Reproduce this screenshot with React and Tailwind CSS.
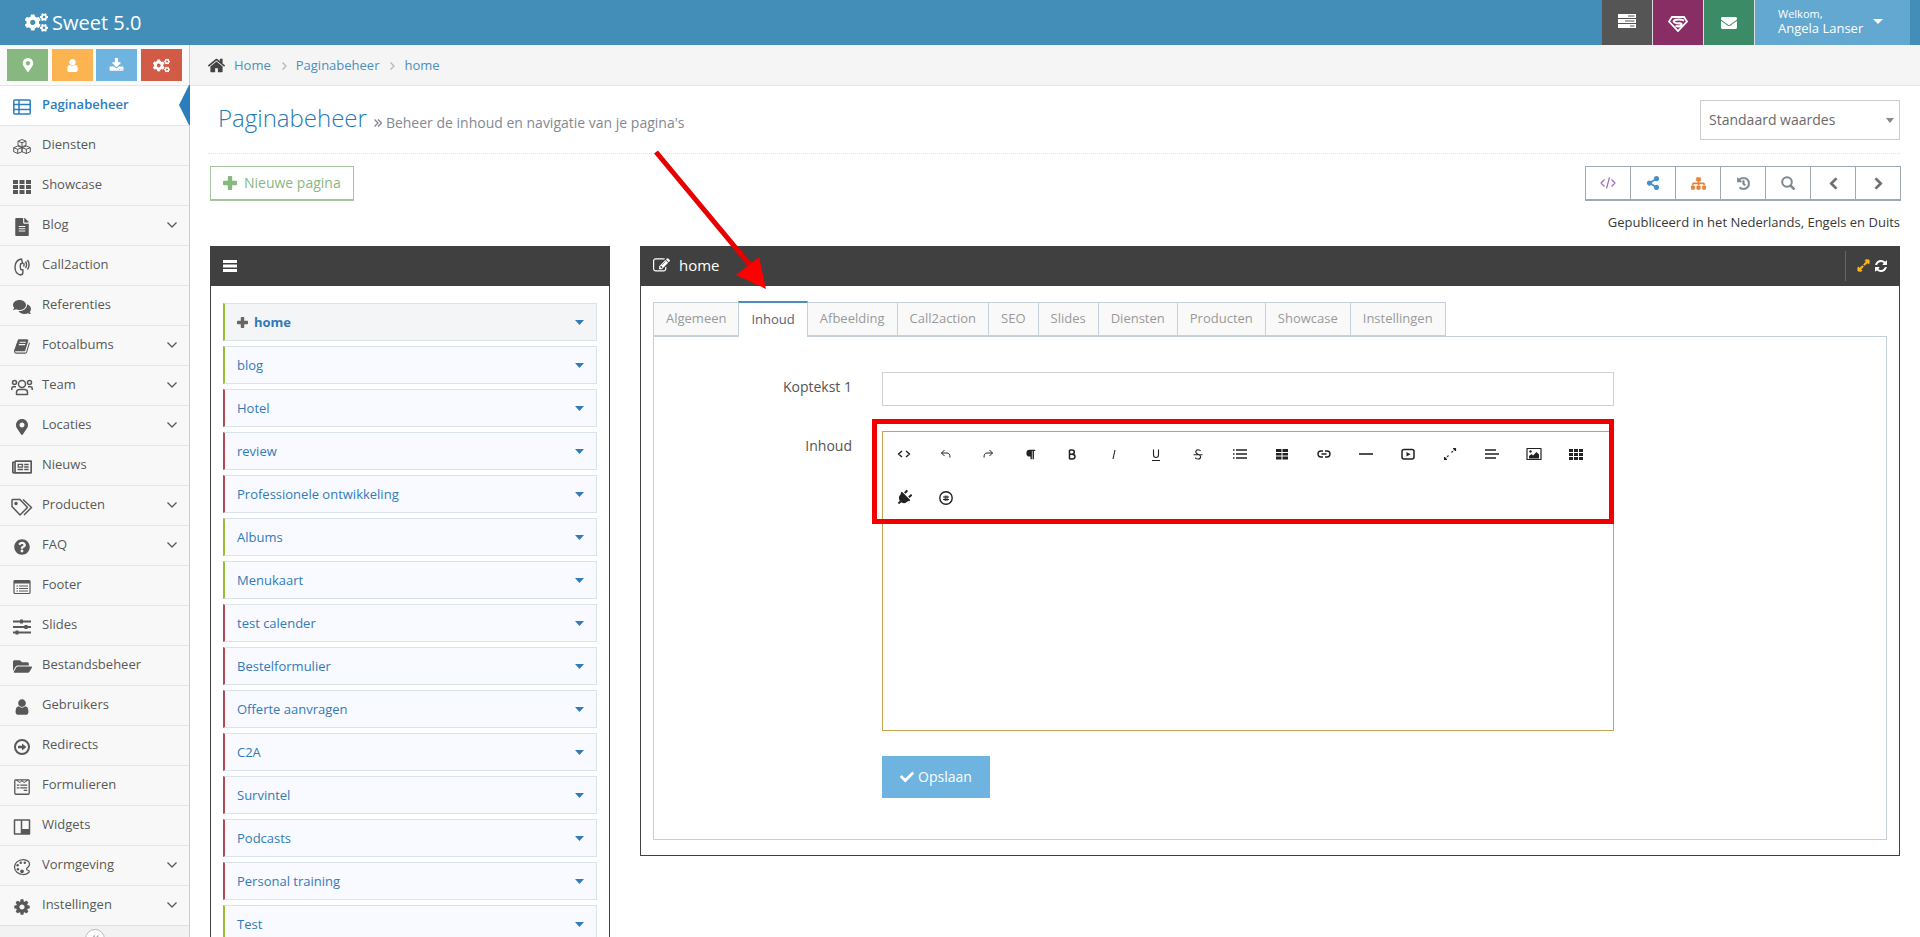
import { useState } from 'react'
import {
  FaCogs, FaMapMarkerAlt, FaFileAlt, FaComments, FaRegNewspaper, FaQuestionCircle, FaFolderOpen,
  FaWpforms, FaShareAlt, FaSitemap, FaHistory, FaChevronLeft, FaChevronRight,
  FaCheck, FaExpandAlt, FaEnvelope, FaPlug, FaParagraph,
} from 'react-icons/fa'
import { IoColorPaletteOutline } from 'react-icons/io5'

// Solid glyphs on a 1792 grid
const GLYPHS = {
  home: 'M1472 992v480q0 26-19 45t-45 19h-384v-384h-256v384h-384q-26 0-45-19t-19-45v-480q0-1 .5-3t.5-3l575-474 575 474q1 2 1 6zm223-69l-62 74q-8 9-21 11h-3q-13 0-21-7l-692-577-692 577q-12 8-24 7-13-2-21-11l-62-74q-8-10-7-23.500t11-21.500l719-599q32-26 76-26t76 26l244 204v-195q0-14 9-23t23-9h192q14 0 23 9t9 23v408l219 182q10 8 11 21.500t-7 23.500z',
  user: 'M1536 1399q0 109-62.500 187t-150.500 78h-854q-88 0-150.500-78t-62.500-187q0-85 8.500-160.500t31.500-152 58.500-131 94-89 134.500-34.500q131 128 313 128t313-128q76 0 134.500 34.500t94 89 58.500 131 31.500 152 8.500 160.500zm-256-887q0 159-112.500 271.500t-271.500 112.500-271.500-112.500-112.500-271.500 112.500-271.500 271.500-112.500 271.500 112.500 112.500 271.500z',
  download: 'M1344 1344q0-26-19-45t-45-19-45 19-19 45 19 45 45 19 45-19 19-45zm256 0q0-26-19-45t-45-19-45 19-19 45 19 45 45 19 45-19 19-45zm128-224v320q0 40-28 68t-68 28h-1472q-40 0-68-28t-28-68v-320q0-40 28-68t68-28h465l135 136q58 56 136 56t136-56l136-136h464q40 0 68 28t28 68zm-325-569q17 41-14 70l-448 448q-18 19-45 19t-45-19l-448-448q-31-29-14-70 17-39 59-39h256v-448q0-26 19-45t45-19h256q26 0 45 19t19 45v448h256q42 0 59 39z',
  book: 'M1639 478q40 57 18 129l-275 906q-19 64-76.500 107.500t-122.500 43.500h-923q-77 0-148.500-53.500t-99.500-131.500q-24-67-2-127 0-4 3-27t4-37q1-8-3-21.500t-3-19.500q2-11 8-21t16.500-23.500 16.500-23.500q23-38 45-91.500t30-91.500q3-10 .5-30t-.5-28q3-11 17-28t17-23q21-36 42-92t25-90q1-9-2.500-32t.5-28q4-13 22-30.500t22-22.500q19-26 42.500-84.500t27.500-96.500q1-8-3-25.500t-2-26.500q2-8 9-18t18-23 17-21q8-12 16.500-30.500t15-35 16-36 19.500-32 26.500-23.500 36-11.500 47.500 5.500l-1 3q38-9 51-9h761q74 0 114 56t18 130l-274 906q-36 119-71.500 153.500t-128.500 34.500h-869q-27 0-38 15-11 16-1 43 24 70 144 70h923q29 0 56-15.500t35-41.500l300-987q7-22 5-57 38 15 59 43zm-1064 2q-4 13 2 22.500t20 9.500h608q13 0 25.500-9.500t16.500-22.500l21-64q4-13-2-22.500t-20-9.500h-608q-13 0-25.500 9.500t-16.500 22.500zm-83 256q-4 13 2 22.500t20 9.500h608q13 0 25.500-9.500t16.500-22.500l21-64q4-13-2-22.500t-20-9.500h-608q-13 0-25.500 9.500t-16.500 22.500z',
  cog: 'M1152 896q0-106-75-181t-181-75-181 75-75 181 75 181 181 75 181-75 75-181zm512-109v222q0 12-8 23t-20 13l-185 28q-19 54-39 91 35 50 107 138 10 12 10 25t-9 23q-27 37-99 108t-94 71q-12 0-26-9l-138-108q-44 23-91 38-16 136-29 186-7 28-36 28h-222q-14 0-24.500-8.500t-11.500-21.500l-28-184q-49-16-90-37l-141 107q-10 9-25 9-14 0-25-11-126-114-165-168-7-10-7-23 0-12 8-23 15-21 51-66.500t54-70.500q-27-50-41-99l-183-27q-13-2-21-12.500t-8-23.500v-222q0-12 8-23t19-13l186-28q14-46 39-92-40-57-107-138-10-12-10-24 0-10 9-23 26-36 98.500-107.500t94.500-71.500q13 0 26 10l138 107q44-23 91-38 16-136 29-186 7-28 36-28h222q14 0 24.500 8.500t11.500 21.500l28 184q49 16 90 37l142-107q9-9 24-9 13 0 25 10 129 119 165 170 7 8 7 22 0 12-8 23-15 21-51 66.500t-54 70.500q26 50 41 98l183 28q13 2 21 12.500t8 23.500z',
  edit: 'M888 1184l116-116-152-152-116 116v56h96v96h56zm440-720q-16-16-33 1l-350 350q-17 17-1 33t33-1l350-350q17-17 1-33zm80 594v190q0 119-84.500 203.500t-203.500 84.500h-832q-119 0-203.500-84.500t-84.500-203.500v-832q0-119 84.500-203.500t203.500-84.500h832q63 0 117 25 15 7 18 23 3 17-9 29l-49 49q-14 14-32 8-23-6-45-6h-832q-66 0-113 47t-47 113v832q0 66 47 113t113 47h832q66 0 113-47t47-113v-126q0-13 9-22l64-64q15-15 35-7t20 29zm-96-738l288 288-672 672h-288v-288zm444 132l-92 92-288-288 92-92q28-28 68-28t68 28l152 152q28 28 28 68t-28 68z',
  refresh: 'M1639 1056q0 5-1 7-64 268-268 434.500t-478 166.500q-146 0-282.500-55t-243.500-157l-129 129q-19 19-45 19t-45-19-19-45v-448q0-26 19-45t45-19h448q26 0 45 19t19 45-19 45l-137 137q71 66 161 102t187 36q134 0 250-65t186-179q11-17 53-117 8-23 30-23h192q13 0 22.500 9.500t9.500 22.500zm25-800v448q0 26-19 45t-45 19h-448q-26 0-45-19t-19-45 19-45l138-138q-148-137-349-137-134 0-250 65t-186 179q-11 17-53 117-8 23-30 23h-199q-13 0-22.500-9.500t-9.500-22.500v-7q65-268 270-434.500t480-166.500q146 0 284 55.500t245 156.500l130-129q19-19 45-19t45 19 19 45z',
}

function Glyph({ name, size = 18 }) {
  return (
    <svg width={size} height={size} viewBox="0 0 1792 1792" fill="currentColor" aria-hidden="true">
      <path d={GLYPHS[name]} />
    </svg>
  )
}

// Line drawings, one unit per pixel
function Line({ w = 18, h = 18, sw = 1.5, children }) {
  return (
    <svg width={w} height={h} viewBox={`0 0 ${w} ${h}`} fill="none" stroke="currentColor"
      strokeWidth={sw} strokeLinejoin="round" aria-hidden="true">
      {children}
    </svg>
  )
}

function Caret({ width = 9 }) {
  return (
    <svg width={width} height="5" viewBox="0 0 10 5" preserveAspectRatio="none" fill="currentColor" aria-hidden="true">
      <path d="M0 0h10L5 5z" />
    </svg>
  )
}

function Plus({ size = 14 }) {
  return (
    <svg width={size} height={size} viewBox="0 0 14 14" fill="currentColor" aria-hidden="true">
      <path d="M5.800 0h2.400q1 0 1 1v3.800H13q1 0 1 1v2.400q0 1-1 1H9.200V13q0 1-1 1H5.800q-1 0-1-1V9.200H1q-1 0-1-1V5.800q0-1 1-1h3.800V1q0-1 1-1z" />
    </svg>
  )
}

const SIDEBAR = [
  { label: 'Paginabeheer', active: true, icon: <Line><rect x=".8" y="2" width="16.400" height="14" rx="1" /><path d="M1 6.500h16M1 11.500h16M6 2v14" /></Line> },
  {
    label: 'Diensten',
    icon: (
      <Line sw={1}>
        <path d="M9 1.500l4 1.700v4L9 9 5 7.200v-4zM5 3.200l4 1.600 4-1.600M9 4.800V9M4.700 8L.7 9.700v4l4 1.800L9 13.700V9.700zM.7 9.700l4 1.600L9 9.700M4.700 11.300v4.200M13.300 8L9 9.700v4l4.300 1.800 4-1.800v-4zM9 9.700l4.300 1.600 4-1.600M13.300 11.300v4.200" />
      </Line>
    ),
  },
  { label: 'Showcase', icon: <Line><path fill="currentColor" stroke="none" d="M0 2h5v4H0zM6.500 2h5v4h-5zM13 2h5v4h-5zM0 7h5v4H0zM6.500 7h5v4h-5zM13 7h5v4h-5zM0 12h5v4H0zM6.500 12h5v4h-5zM13 12h5v4h-5z" /></Line> },
  { label: 'Blog', icon: <FaFileAlt size={18} />, sub: true },
  {
    label: 'Call2action',
    icon: (
      <Line w={16} h={18} sw={1.400}>
        <path d="M5.500 1.500L7.500 1l1 4-2 1q-.6 3 .3 5.500l2.200.5-.3 4-2.200 1Q1 15.500 1 9.500 1 3.500 5.500 1.500z" />
        <path d="M9.500 5q1.200 1.700 0 3.500M11.500 3.500q2.200 3.200 0 6.500M13.500 2q3.200 4.700 0 9.500" />
      </Line>
    ),
  },
  { label: 'Referenties', icon: <FaComments size={18} /> },
  { label: 'Fotoalbums', icon: <Glyph name="book" size={17} />, sub: true },
  {
    label: 'Team',
    sub: true,
    icon: (
      <Line w={22} h={18}>
        <circle cx="11" cy="6" r="3.500" /><circle cx="3.500" cy="4.500" r="2" /><circle cx="18.500" cy="4.500" r="2" />
        <path d="M5.500 16.500h11v-2q0-3-3-3h-5q-3 0-3 3zM.8 12v-1.500q0-1.700 1.700-1.700h2.500M21.200 12v-1.500q0-1.700-1.700-1.700h-2.500" />
      </Line>
    ),
  },
  { label: 'Locaties', icon: <FaMapMarkerAlt size={16} />, sub: true },
  { label: 'Nieuws', icon: <FaRegNewspaper size={20} /> },
  {
    label: 'Producten',
    sub: true,
    icon: (
      <Line w={22} h={18}>
        <path d="M1 2v6.500l8 8.500 7.500-7.500L9 1.500H1.500zM12 1.500l8.500 8-7.500 7.500" />
        <circle cx="5" cy="5.500" r="1" fill="currentColor" />
      </Line>
    ),
  },
  { label: 'FAQ', icon: <FaQuestionCircle size={16} />, sub: true },
  { label: 'Footer', icon: <Line sw={1.200}><rect x="1" y="2.500" width="16" height="13" rx="1" /><path strokeWidth="3" d="M1 4h16" /><path d="M3.500 8h1.500M6 8h9M3.500 10.500h1.500M6 10.500h9M3.500 13h1.500M6 13h9" /></Line> },
  { label: 'Slides', icon: <Line sw={2}><path d="M0 3.500h18M0 9h18M0 14.500h18" /><path strokeWidth="3" d="M8.500 1.500v4M13 7v4M4 12.500v4" /></Line> },
  { label: 'Bestandsbeheer', icon: <FaFolderOpen size={19} /> },
  { label: 'Gebruikers', icon: <Glyph name="user" /> },
  { label: 'Redirects', icon: <Line sw={2}><circle cx="9" cy="9" r="7" /><path strokeWidth="2.500" d="M5 9h5" /><path fill="currentColor" stroke="none" d="M9 5.500L13.500 9 9 12.500z" /></Line> },
  { label: 'Formulieren', icon: <FaWpforms size={18} /> },
  { label: 'Widgets', icon: <Line><rect x="1.500" y="2" width="15" height="14" /><path d="M8.500 2v14" /><path fill="currentColor" stroke="none" d="M8.500 11h8v5h-8z" /></Line> },
  { label: 'Vormgeving', icon: <IoColorPaletteOutline size={20} />, sub: true },
  { label: 'Instellingen', icon: <Glyph name="cog" />, sub: true },
]

const SHORTCUTS = [
  { title: 'Locaties', color: 'bg-[#87b87f]', icon: <FaMapMarkerAlt size={14} /> },
  { title: 'Gebruikers', color: 'bg-[#fbb450]', icon: <Glyph name="user" size={15} /> },
  { title: 'Download', color: 'bg-[#6fb3e0]', icon: <Glyph name="download" size={15} /> },
  { title: 'Instellingen', color: 'bg-[#d15b47]', icon: <FaCogs size={17} /> },
]

const PAGES = [
  { name: 'home', online: true, active: true },
  { name: 'blog', online: true },
  { name: 'Hotel' },
  { name: 'review' },
  { name: 'Professionele ontwikkeling' },
  { name: 'Albums', online: true },
  { name: 'Menukaart', online: true },
  { name: 'test calender' },
  { name: 'Bestelformulier' },
  { name: 'Offerte aanvragen' },
  { name: 'C2A' },
  { name: 'Survintel' },
  { name: 'Podcasts' },
  { name: 'Personal training' },
  { name: 'Test', online: true },
]

const TABS = ['Algemeen', 'Inhoud', 'Afbeelding', 'Call2action', 'SEO', 'Slides', 'Diensten', 'Producten', 'Showcase', 'Instellingen']

const ACTIONS = [
  { title: 'Code', color: 'text-[#a069c3]', icon: <Line w={16} h={14} sw={1.200}><path d="M4.500 3.500L1 7l3.500 3.500M11.500 3.500L15 7l-3.500 3.500M9.500 1.500l-3 11" /></Line> },
  { title: 'Delen', color: 'text-[#478fca]', icon: <FaShareAlt size={14} /> },
  { title: 'Sitemap', color: 'text-[#e8833a]', icon: <FaSitemap size={15} stroke="currentColor" strokeWidth="20" /> },
  { title: 'Geschiedenis', color: 'text-[#7d8790]', icon: <FaHistory size={13} stroke="currentColor" strokeWidth="18" /> },
  { title: 'Zoeken', color: 'text-[#7d8790]', icon: <Line w={14} h={14} sw={2}><circle cx="6" cy="6" r="4.800" /><path strokeWidth="2.500" d="M9.500 9.500L13.500 13.500" /></Line> },
  { title: 'Vorige', color: 'text-[#6b6b6b]', icon: <FaChevronLeft size={13} stroke="currentColor" strokeWidth="35" /> },
  { title: 'Volgende', color: 'text-[#6b6b6b]', icon: <FaChevronRight size={13} stroke="currentColor" strokeWidth="35" /> },
]

const EDITOR_TOOLS = [
  { title: 'HTML', icon: <Line w={14} h={14}><path d="M5 4L1.500 7 5 10M9 4l3.500 3L9 10" /></Line> },
  { title: 'Ongedaan maken', icon: <Line w={14} h={14} sw={1}><path d="M5.500 3L2.500 6l3 3M2.500 6H8q3 0 3 4.500" /></Line> },
  { title: 'Opnieuw', icon: <Line w={14} h={14} sw={1}><path d="M8.500 3l3 3-3 3M11.500 6H6q-3 0-3 4.500" /></Line> },
  { title: 'Opmaak', icon: <FaParagraph size={11} /> },
  { title: 'Vet', icon: <Line w={14} h={14}><path d="M4.500 3v9M4.500 3H7q2.300 0 2.300 2.100T7 7.300H4.500M7 7.300q3 0 3 2.300T7.300 12H4.500" /></Line> },
  { title: 'Cursief', icon: <Line w={14} h={14} sw={1.100}><path d="M8 3L6 12" /></Line> },
  { title: 'Onderstreept', icon: <Line w={14} h={14} sw={1.100}><path d="M4.500 2.500V8q0 2.500 2.500 2.500T9.500 8V2.500M3 13.500h8" /></Line> },
  { title: 'Doorgehaald', icon: <Line w={14} h={14} sw={1.100}><path d="M9.500 4Q9 2.800 7 2.800T4.700 4.800Q4.700 6.500 7 7.200T9.600 9.700Q9.600 12 7 12T4.500 10.500M2.500 7.800h9" /></Line> },
  { title: 'Lijst', icon: <Line w={14} h={14} sw={1.600}><path d="M3 3h11M3 7h11M3 11h11M0 3h1.500M0 7h1.500M0 11h1.500" /></Line> },
  { title: 'Tabel', icon: <Line w={14} h={14}><path fill="currentColor" stroke="none" d="M1 2h5.500v3H1zM7.500 2H13v3H7.500zM1 6h5.500v2.500H1zM7.500 6H13v2.500H7.500zM1 9.500h5.500v3H1zM7.500 9.500H13v3H7.500z" /></Line> },
  { title: 'Link', icon: <Line w={14} h={14} sw={1.400}><path d="M6 4H4Q1 4 1 7t3 3h2M8 4h2q3 0 3 3t-3 3H8M4.500 7h5" /></Line> },
  { title: 'Lijn', icon: <Line w={14} h={14} sw={1.600}><path d="M0 7h14" /></Line> },
  { title: 'Video', icon: <Line w={14} h={14}><rect x="1" y="2.500" width="12" height="9.500" rx="2" /><path fill="currentColor" stroke="none" d="M5.500 5l4 2.200-4 2.300z" /></Line> },
  { title: 'Volledig scherm', icon: <Line w={14} h={14} sw={1.200}><path strokeDasharray="2 1" d="M8.500 5.500L12.500 1.500M5.500 8.500L1.500 12.500" /><path d="M10 1.500h2.500V4M1.500 10v2.500H4" /></Line> },
  { title: 'Uitlijnen', icon: <Line w={14} h={14} sw={1.600}><path d="M0 3h11M0 7h14M0 11h11" /></Line> },
  { title: 'Afbeelding', icon: <Line w={16} h={14} sw={1.200}><rect x="1" y="1.500" width="14" height="11" /><path fill="currentColor" stroke="none" d="M3 11.500V9l2.500-2 1.500 1.500L10.500 5 13 7.500v4z" /><circle cx="4.500" cy="4.500" r="1.200" fill="currentColor" stroke="none" /></Line> },
  { title: 'Widgets', icon: <Line w={14} h={14}><path fill="currentColor" stroke="none" d="M0 2h4v3H0zM5 2h4v3H5zM10 2h4v3h-4zM0 6h4v3H0zM5 6h4v3H5zM10 6h4v3h-4zM0 10h4v3H0zM5 10h4v3H5zM10 10h4v3h-4z" /></Line> },
  { title: 'Plug-in', icon: <span className="rotate-45"><FaPlug size={16} /></span> },
  { title: 'Variabele', icon: <Line w={14} h={14} sw={1.400}><circle cx="7" cy="7" r="6.200" /><path strokeWidth="1" d="M4 6h6M4 8.500h6M6.200 4.500v5.500M8 4.500v5.500" /></Line> },
]

function Navbar() {
  return (
    <header className="flex h-[45px] shrink-0 items-stretch justify-between bg-[#438eb9] pr-[10px] text-white">
      <a href="#" className="flex items-center gap-1 pl-[25px] text-xl">
        <FaCogs size={23} />
        Sweet 5.0
      </a>
      <nav className="flex">
        <button className="flex w-[50px] items-center justify-center bg-[#555] pb-1" title="Taken">
          <Line w={18} h={14}>
            <path fill="currentColor" stroke="none" fillRule="evenodd" d="M0 0h18v4H0zM10 1.500h6.500v1H10zM0 5h18v4H0zM7 6.500h9.500v1H7zM0 10h18v4H0zM12 11.500h4.500v1H12z" />
          </Line>
        </button>
        <button className="flex w-[51px] items-center justify-center border-l border-[#ddd] bg-[#892e65] pt-0.5" title="Super">
          <svg width="20" height="16" viewBox="0 0 20 16" fill="none" stroke="#fff" aria-hidden="true">
            <path strokeWidth="1.800" d="M4 1h12l3 4.500-9 9.500L1 5.500z" />
            <path strokeWidth="2.200" d="M16 4.500Q12 3 8 3.800 5 4.500 6 6t6 1.300q2.500.7 1 2.200T7.500 10" />
          </svg>
        </button>
        <button className="flex w-[51px] items-center justify-center border-l border-[#ddd] bg-[#3a8b66]" title="Berichten">
          <FaEnvelope size={16} />
        </button>
        <button className="flex w-[156px] items-center gap-2.5 border-l border-[#ddd] bg-[#62a8d1] pb-[3px] pl-[23px] text-left text-[13px] leading-[14px]">
          <span>
            <small className="block text-[11px] leading-[14px]">Welkom,</small>
            Angela Lanser
          </span>
          <Caret width={10} />
        </button>
      </nav>
    </header>
  )
}

function Sidebar() {
  return (
    <aside className="flex w-[190px] shrink-0 flex-col border-r border-[#ccc] bg-[#f2f2f2]">
      <div className="flex h-10 shrink-0 justify-between bg-[#fafafa] px-[7px] py-1">
        {SHORTCUTS.map(s => (
          <button key={s.title} title={s.title}
            className={`flex w-[41px] items-center justify-center text-white ${s.color}`}>
            {s.icon}
          </button>
        ))}
      </div>
      <ul>
        {SIDEBAR.map(item => (
          <li key={item.label} className="relative">
            <a href="#"
              className={`flex h-10 items-center border-t border-[#e5e5e5] pl-[11px] text-[13px] ${item.active ? 'bg-white font-semibold text-[#2b7dbc]' : 'bg-[#f8f8f8] text-[#585858]'}`}>
              <span className="mt-0.5 mr-[9px] flex w-[22px] justify-center">{item.icon}</span>
              <span className="flex-1 pb-0.5">{item.label}</span>
              {item.sub && (
                <span className="mr-3 pb-0.5"><Line w={10} h={6} sw={1.300}><path d="M.5.5L5 5 9.500.5" /></Line></span>
              )}
            </a>
            {item.active && (
              <svg className="absolute top-0 -right-px" width="11" height="40" viewBox="0 0 11 40" aria-hidden="true">
                <path fill="#2b7dbc" d="M11 0v40H10L0 20 10 0z" />
              </svg>
            )}
          </li>
        ))}
      </ul>
      <div className="flex shrink-0 justify-center border-t border-[#e0e0e0] pt-[3px]">
        <button title="Inklappen" className="flex h-5 w-5 items-center justify-center rounded-full border border-[#bbb] bg-white text-[#aaa]">
          <Line w={8} h={8} sw={1.200}><path d="M4 .5L.5 4 4 7.500M7.500.5L4 4l3.500 3.500" /></Line>
        </button>
      </div>
    </aside>
  )
}

function Breadcrumbs() {
  return (
    <nav className="flex h-[41px] items-center border-b border-[#e5e5e5] bg-[#f5f5f5] pt-px pl-[17px] text-[13px] text-[#4c8fbd]">
      <span className="mr-2 text-[#444]"><Glyph name="home" size={19} /></span>
      {['Home', 'Paginabeheer', 'home'].map((crumb, i) => (
        <span key={crumb} className="flex items-center">
          {i > 0 && (
            <span className="mr-[9px] ml-[11px] text-[#b2b6bf]"><Line w={5} h={8} sw={1.300}><path d="M.5.5L4 4 .5 7.500" /></Line></span>
          )}
          <a href="#">{crumb}</a>
        </span>
      ))}
    </nav>
  )
}

function PageList() {
  return (
    <section className="w-[400px] shrink-0 border border-[#404040]">
      <header className="flex h-[39px] items-center bg-[#404040] pb-px pl-3 text-white">
        <Line w={14} h={12} sw={3}><path d="M0 1.500h14M0 6h14M0 10.500h14" /></Line>
      </header>
      <ul className="flex flex-col gap-[5px] px-3 py-[17px]">
        {PAGES.map(page => (
          <li key={page.name}
            className={`flex h-[38px] items-center justify-between border border-l-2 border-[#dae2ea] pt-px pr-3 pl-3 text-[13px] text-[#337ab7] ${page.online ? 'border-l-[#9abc32]' : 'border-l-[#b04a55]'} ${page.active ? 'bg-[#f4f5f7] font-bold' : 'bg-[#f8faff]'}`}>
            <a href="#" className="flex items-center gap-1.5">
              {page.active && <span className="text-[#666]"><Plus size={11} /></span>}
              {page.name}
            </a>
            <button title={`Opties ${page.name}`}><Caret /></button>
          </li>
        ))}
      </ul>
    </section>
  )
}

function ContentForm() {
  return (
    <form className="grid grid-cols-[198fr_732fr_242fr] gap-x-[30px] pt-[35px] pb-[41px] text-sm text-[#555]"
      onSubmit={e => e.preventDefault()}>
      <label htmlFor="heading" className="pt-[5px] text-right">Koptekst 1</label>
      <input id="heading" type="text" className="h-[34px] border border-[#d0d0d0] bg-white px-2 outline-none" />
      <span />

      <label htmlFor="body" className="pt-[30px] text-right">Inhoud</label>
      <div className="relative mt-[25px] border border-[#c8a351]">
        <div className="flex flex-wrap text-[#222]">
          {EDITOR_TOOLS.map(tool => (
            <button key={tool.title} type="button" title={tool.title}
              className="flex h-11 w-[42px] items-center justify-center">
              {tool.icon}
            </button>
          ))}
        </div>
        <textarea id="body" className="block h-[210px] w-full resize-none px-4 outline-none" />
        {/* highlight around the toolbar */}
        <div className="pointer-events-none absolute -top-[13px] -right-px -left-[11px] h-[105px] border-5 border-[#f20000]" />
      </div>
      <span />

      <div className="col-start-2 mt-[25px]">
        <button type="submit" className="flex h-[42px] items-center gap-1 bg-[#6fb3e0] px-[18px] text-white">
          <FaCheck size={14} />
          Opslaan
        </button>
      </div>
    </form>
  )
}

function PageEditor() {
  const [tab, setTab] = useState('Inhoud')

  return (
    <section className="relative min-w-0 flex-1 border border-[#404040]">
      <header className="flex h-[39px] items-center bg-[#404040] pb-0.5 pl-3 text-white">
        <Glyph name="edit" size={17} />
        <h2 className="ml-[9px] flex-1 text-[15px]">home</h2>
        <div className="flex h-[30px] items-center gap-1 border-l border-[#666] pr-[11px] pl-[11px]">
          <button title="Vergroten" className="text-[#ffb515]"><FaExpandAlt size={13} stroke="currentColor" strokeWidth="30" /></button>
          <button title="Vernieuwen"><Glyph name="refresh" size={14} /></button>
        </div>
      </header>

      <div className="px-3 pt-[14px] pb-[15px]">
        <div className="flex items-end pl-px" role="tablist">
          {TABS.map(name => (
            <button key={name} role="tab" aria-selected={tab === name} onClick={() => setTab(name)}
              className={tab === name
                ? 'relative top-px -ml-px h-9 border-x border-t-2 border-[#c5d0dc] border-t-[#4c8fbd] bg-white px-3 text-[13px] text-[#576373]'
                : '-ml-px h-[34px] border border-[#c5d0dc] bg-[#f9f9f9] px-3 text-[13px] text-[#999]'}>
              {name}
            </button>
          ))}
        </div>
        <div className="border border-[#c5d0dc]">
          <ContentForm />
        </div>
      </div>

      <svg className="pointer-events-none absolute -top-[98px] left-[13px]" width="116" height="142" viewBox="0 0 116 142" aria-hidden="true">
        <path stroke="#e60000" strokeWidth="5" d="M2 3l94 113" />
        <path fill="#f00" d="M82 126l23-18 7 32z" />
      </svg>
    </section>
  )
}

export default function App() {
  return (
    <div className="flex h-screen flex-col overflow-hidden bg-white font-['Open_Sans',sans-serif] text-[13px] text-[#393939]">
      <Navbar />
      <div className="flex min-h-0 flex-1">
        <Sidebar />
        <main className="min-w-0 flex-1">
          <Breadcrumbs />
          <div className="pr-5 pl-[18px]">
            <div className="flex h-[68px] items-center justify-between border-b border-dotted border-[#e2e2e2] pl-[10px]">
              <h1 className="pb-[3px] text-2xl font-light text-[#2679b5]">
                Paginabeheer
                <small className="ml-[7px] inline-flex items-center gap-1 text-sm font-normal text-[#838992]">
                  <Line w={8} h={8} sw={1.400}><path d="M.5.5L4 4 .5 7.500M4 .5L7.500 4 4 7.500" /></Line>
                  Beheer de inhoud en navigatie van je pagina's
                </small>
              </h1>
              <div className="relative pt-px">
                <select aria-label="Waardes" className="h-10 w-[200px] appearance-none border border-[#ccc] bg-white pl-2 text-sm text-[#696969]">
                  <option>Standaard waardes</option>
                </select>
                <span className="pointer-events-none absolute inset-y-0 right-[6px] flex items-center pt-0.5 text-[#888]"><Caret width={8} /></span>
              </div>
            </div>

            <div className="mt-3 flex items-start justify-between pl-0.5">
              <button className="flex h-[35px] items-center gap-[7px] border border-b-2 border-[#a3c69d] px-3 text-sm text-[#87b87f]">
                <Plus size={14} />
                Nieuwe pagina
              </button>
              <div className="-mr-px flex">
                {ACTIONS.map(a => (
                  <button key={a.title} title={a.title}
                    className={`-ml-px flex h-[35px] w-[46px] items-center justify-center border border-b-2 border-[#a0a9b0] ${a.color}`}>
                    {a.icon}
                  </button>
                ))}
              </div>
            </div>

            <p className="mt-[11px] text-right leading-5">Gepubliceerd in het Nederlands, Engels en Duits</p>

            <div className="mt-3.5 flex items-start gap-[30px] pl-0.5">
              <PageList />
              <PageEditor />
            </div>
          </div>
        </main>
      </div>
    </div>
  )
}
